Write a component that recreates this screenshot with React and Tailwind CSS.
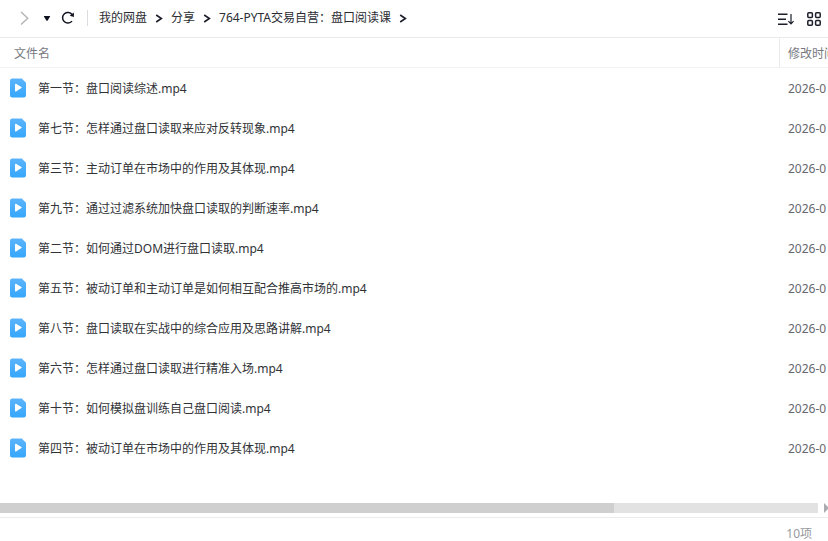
import React from 'react';

const path = ['我的网盘', '分享', '764-PYTA交易自营：盘口阅读课'];

const files = [
  '第一节：盘口阅读综述.mp4',
  '第七节：怎样通过盘口读取来应对反转现象.mp4',
  '第三节：主动订单在市场中的作用及其体现.mp4',
  '第九节：通过过滤系统加快盘口读取的判断速率.mp4',
  '第二节：如何通过DOM进行盘口读取.mp4',
  '第五节：被动订单和主动订单是如何相互配合推高市场的.mp4',
  '第八节：盘口读取在实战中的综合应用及思路讲解.mp4',
  '第六节：怎样通过盘口读取进行精准入场.mp4',
  '第十节：如何模拟盘训练自己盘口阅读.mp4',
  '第四节：被动订单在市场中的作用及其体现.mp4',
];

function Crumb({ label }) {
  return (
    <li className="flex items-center gap-2">
      <a href="#" className="text-[#2b2d33]">{label}</a>
      <svg width="8" height="10" viewBox="0 0 8 10" fill="none" stroke="#1c1f2b" strokeWidth="1.6" aria-hidden="true">
        <path d="M1.2 2 6.4 5.5 1.2 9" />
      </svg>
    </li>
  );
}

function Toolbar() {
  return (
    <header className="flex h-[38px] shrink-0 items-center justify-between border-b border-[#ebebed] pr-1.5 pl-4">
      <div className="flex items-center pb-0.5">
        <button type="button" aria-label="前进" disabled>
          <svg width="16" height="16" viewBox="0 0 16 16" fill="none" stroke="#b3b3b6" strokeWidth="1.4">
            <path d="M5 2l6.8 6.3L5 14.6" />
          </svg>
        </button>
        <button type="button" aria-label="历史记录" className="ml-2">
          <svg width="14" height="16" viewBox="0 0 14 16" fill="#10131f">
            <path d="M4.4 6h5.2q.8 0 .4.7L7.6 10.6q-.6.8-1.2 0L4 6.7q-.4-.7.4-.7z" />
          </svg>
        </button>
        <button type="button" aria-label="刷新" className="ml-1.5">
          <svg width="16" height="16" viewBox="0 0 16 16" fill="none" stroke="#10131f" strokeWidth="1.5">
            <path d="M12 11.1a5.3 5.3 0 1 1 .2-6.4" />
            <path d="M13.9 2.6v4.3l-4.2-1.2z" fill="#10131f" stroke="none" />
          </svg>
        </button>
        <span className="ml-[11px] h-4 w-px bg-[#dcdce0]" />
        <nav aria-label="路径" className="ml-[11px]">
          <ol className="flex items-center gap-2 whitespace-nowrap">
            {path.map((label) => <Crumb key={label} label={label} />)}
          </ol>
        </nav>
      </div>
      <div className="flex items-center gap-3">
        <button type="button" aria-label="排序">
          <svg width="17" height="16" viewBox="0 0 17 16" fill="none" stroke="#1c1f2b" strokeWidth="1.5">
            <path d="M1 3.2h9.5M1 8.2h8M1 13.2h9.5" />
            <path d="M14 3v9.8M11.4 10.1l2.6 2.8 2.6-2.8" strokeWidth="1.2" />
          </svg>
        </button>
        <button type="button" aria-label="网格视图">
          <svg width="16" height="16" viewBox="0 0 16 16" fill="none" stroke="#1c1f2b" strokeWidth="1.5">
            <rect x="1.8" y="1.8" width="4.6" height="4.6" rx="1" />
            <rect x="9.6" y="1.8" width="4.6" height="4.6" rx="1" />
            <rect x="1.8" y="9.6" width="4.6" height="4.6" rx="1" />
            <rect x="9.6" y="9.6" width="4.6" height="4.6" rx="1" />
          </svg>
        </button>
      </div>
    </header>
  );
}

function VideoIcon() {
  return (
    <svg width="16" height="20" viewBox="0 0 16 20" aria-hidden="true">
      <defs>
        <linearGradient id="video" x1="0" y1="0" x2="0" y2="1">
          <stop offset="0" stopColor="#5cb3fb" />
          <stop offset="1" stopColor="#36a7fd" />
        </linearGradient>
      </defs>
      <path d="M2.2.5h9.6L16 4.7v12.6a2.2 2.2 0 0 1-2.2 2.2H2.2A2.2 2.2 0 0 1 0 17.3V2.7A2.2 2.2 0 0 1 2.2.5z" fill="url(#video)" />
      <path d="M5 6.4c0-.6.5-.8 1-.6l5.4 3.3c.4.3.4.7 0 1L6 13.4c-.5.3-1 0-1-.5z" fill="#fff" />
    </svg>
  );
}

function FileTable() {
  return (
    <table className="w-[1104px] table-fixed border-separate border-spacing-0 text-left">
      <thead>
        <tr className="h-[30px] text-[#77797f]">
          <th scope="col" className="w-[780px] border-r border-b border-[#ebebed] border-b-[#f2f2f4] p-0 pt-0.5 pl-3.5 font-normal">文件名</th>
          <th scope="col" className="border-b border-[#f2f2f4] p-0 pt-0.5 pl-2 font-normal">修改时间</th>
        </tr>
      </thead>
      <tbody>
        {files.map((name) => (
          <tr key={name} className="h-10">
            <td className="p-0 pl-2.5">
              <div className="flex items-center gap-3">
                <VideoIcon />
                <span className="pt-0.5 text-[#303236]">{name}</span>
              </div>
            </td>
            <td className="p-0 pt-0.5 pl-2 text-[#66686e]">2026-0</td>
          </tr>
        ))}
      </tbody>
    </table>
  );
}

export default function App() {
  return (
    <div className="flex h-screen flex-col overflow-hidden bg-white font-['Noto_Sans','Noto_Sans_CJK_SC',sans-serif] text-xs leading-4">
      <Toolbar />
      <main className="min-h-0 flex-1 overflow-hidden">
        <FileTable />
      </main>
      <div className="flex h-3.5 shrink-0 items-start">
        <div className="h-2.5 flex-1 bg-[#e2e2e2]">
          <div className="h-full w-3/4 bg-[#cfcfd0]" />
        </div>
        <svg width="10" height="10" viewBox="0 0 10 10" fill="#a9abb0" aria-hidden="true">
          <path d="M6 0l5 5-5 5z" />
        </svg>
      </div>
      <footer className="flex h-6 shrink-0 items-end justify-end border-t border-[#ebebed] pr-4 leading-3.5 text-[#96989e]">
        10项
      </footer>
    </div>
  );
}
